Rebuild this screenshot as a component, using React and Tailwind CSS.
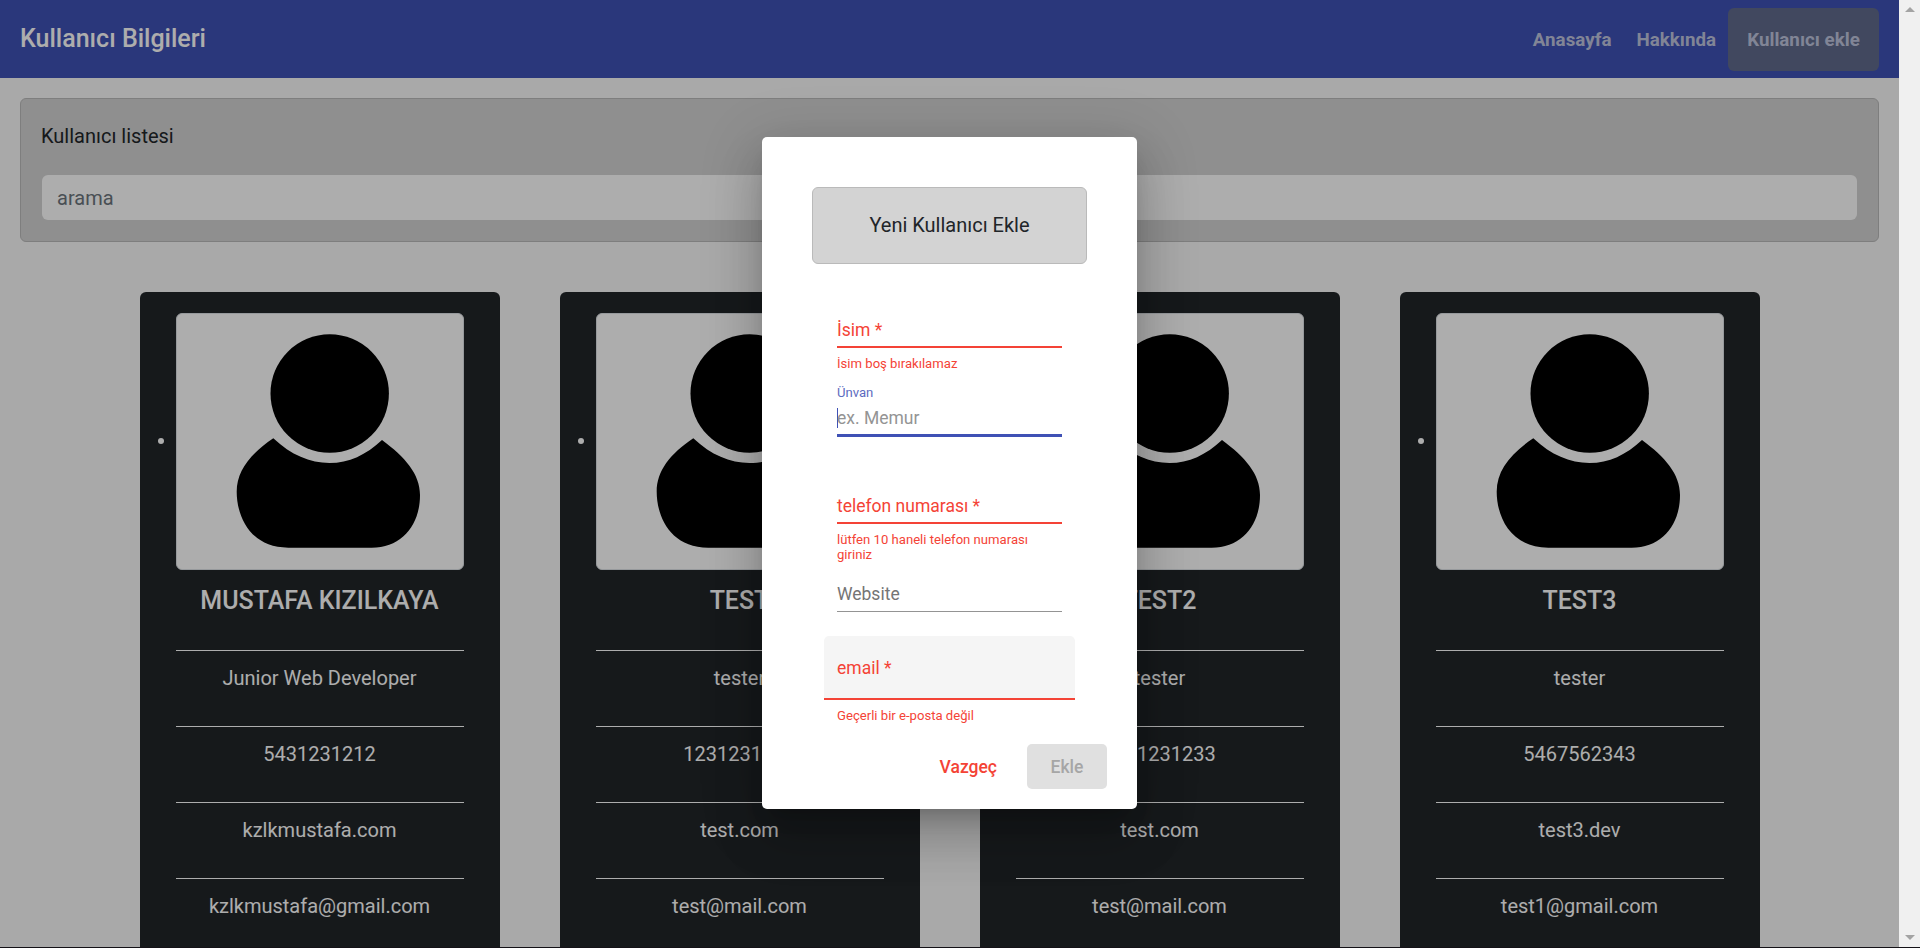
import React from "react";

const users = [
  { name: "MUSTAFA KIZILKAYA", rows: ["Junior Web Developer", "5431231212", "kzlkmustafa.com", "kzlkmustafa@gmail.com"] },
  { name: "TEST", rows: ["tester", "1231231231", "test.com", "test@mail.com"] },
  { name: "TEST2", rows: ["tester", "1231231233", "test.com", "test@mail.com"] },
  { name: "TEST3", rows: ["tester", "5467562343", "test3.dev", "test1@gmail.com"] },
];

function Avatar() {
  return (
    <div className="h-[257px] w-[288px] rounded-md border border-[#dee2e6] bg-white">
      <svg viewBox="1 1 286 255" className="block h-full w-full">
        <circle cx="153.7" cy="80.5" r="59.2" />
        <path d="M97.3 125.3 C115 142 134 150 153.5 150 C173 150 190 142 206 127 C229 144 244 161 244 182 C244 212 226 234.7 195.7 234.7 L112.3 234.7 C74 234.7 60.7 203 60.7 178.7 C60.7 158 74 141 97.3 125.3 Z" />
      </svg>
    </div>
  );
}

function UserCard({ user }) {
  return (
    <div className="flex h-[690px] w-[360px] shrink-0 flex-col items-center rounded-md bg-[#212529] pt-[21px] text-white">
      <div className="flex w-full items-center">
        <span className="ml-[18px] mr-[12px] mt-[-1px] size-[6px] rounded-full bg-white" />
        <Avatar />
      </div>
      <h5 className="mt-[16px] h-[64px] pr-px text-[25px] font-medium leading-[30px]">{user.name}</h5>
      {user.rows.map((row, i) => (
        <div key={i} className="h-[76px] w-[288px] shrink-0 border-t border-white pr-px pt-[12px] text-center text-[20px] leading-[30px]">
          {row}
        </div>
      ))}
    </div>
  );
}

function Field({ label, hint, error }) {
  return (
    <div className="flex h-[88px] flex-col px-[25px]">
      <div className={error ? "h-[32px] border-b-2 border-[#f44336] pt-[2px] text-[17.5px] leading-[24px] text-[#f44336]" : "h-[32px] border-b border-[#949494] pt-[2px] text-[17.5px] leading-[24px] text-[#757575]"}>{label}</div>
      {hint && <div className="mt-[8px] text-[13.125px] leading-[15px] text-[#f44336]">{hint}</div>}
    </div>
  );
}

function Dialog() {
  return (
    <div className="absolute left-[762px] top-[137px] flex h-[672px] w-[375px] flex-col rounded-[5px] bg-white px-[50px] pt-[50px] shadow-[0_14px_19px_-9px_rgba(0,0,0,0.2),0_30px_48px_4px_rgba(0,0,0,0.14),0_11px_58px_10px_rgba(0,0,0,0.12)]">
      <div className="flex h-[77px] shrink-0 items-center justify-center rounded-md border border-[#bababa] bg-[#d3d3d3] pb-[2px] text-[20px] text-[#212529]">
        Yeni Kullanıcı Ekle
      </div>
      <div className="mt-[52px]">
        <Field label="İsim *" hint="İsim boş bırakılamaz" error />
        <div className="flex h-[88px] flex-col px-[25px]">
          <div className="-mt-[21px] h-[22px] text-[13.125px] leading-[20px] text-[#5c6bc0]">Ünvan</div>
          <div className="flex h-[32px] items-start border-b-[3px] border-[#3f51b5] pt-[3px]">
            <span className="-mr-px h-[20px] w-px bg-[#3f51b5]" />
            <span className="-mt-px text-[17.5px] leading-[22px] text-[#949494]">ex. Memur</span>
          </div>
        </div>
        <Field label="telefon numarası *" hint="lütfen 10 haneli telefon numarası giriniz" error />
        <Field label="Website" />
      </div>
      <div className="mx-[12px] -mt-[32px] h-[64px] shrink-0 rounded-t-[5px] border-b-2 border-[#f44336] bg-[#f5f5f5] px-[13px] pt-[20px] text-[17.5px] leading-[24px] text-[#f44336]">
        email *
      </div>
      <div className="ml-[25px] mt-[8px] text-[13.125px] leading-[15px] text-[#f44336]">Geçerli bir e-posta değil</div>
      <div className="-mx-[20px] mt-[21px] flex justify-end gap-[5px]">
        <span className="flex h-[45px] items-center px-[25px] pt-px text-[17.5px] font-medium text-[#f44336]">Vazgeç</span>
        <span className="flex h-[45px] w-[80px] items-center justify-center rounded-[5px] bg-[#e0e0e0] pt-px text-[17.5px] font-medium text-[#a6a6a6]">Ekle</span>
      </div>
    </div>
  );
}

export default function App() {
  return (
    <div className="relative flex h-[948px] w-[1920px] overflow-hidden bg-[#fafafa] font-['Roboto',sans-serif]">
      <div className="flex h-[948px] w-[1899px] shrink-0 flex-col overflow-hidden">
        <nav className="flex h-[78px] shrink-0 items-center justify-between bg-[#3f51b5] px-[20px] text-white">
          <span className="text-[25px] font-medium leading-[40px]">Kullanıcı Bilgileri</span>
          <div className="flex items-center text-[18.75px] font-bold text-[#bfc4de]">
            <span className="pt-[2px]">Anasayfa</span>
            <span className="ml-[25px] pt-[2px]">Hakkında</span>
            <span className="ml-[12px] mt-px flex h-[63px] w-[151px] items-center justify-center rounded-md bg-[#606b8c] pt-px">
              Kullanıcı ekle
            </span>
          </div>
        </nav>
        <section className="mx-[20px] mt-[20px] flex h-[144px] shrink-0 flex-col rounded-md border border-[#bababa] bg-[#d3d3d3] px-[21px] pt-[22px]">
          <div className="-ml-px text-[20px] leading-[30px] text-[#212529]">Kullanıcı listesi</div>
          <div className="mt-[24px] flex h-[45px] items-center rounded-md bg-white px-[15px] text-[20px] text-[#6c757d]">arama</div>
        </section>
        <main className="mt-[50px] flex gap-[60px] px-[140px]">
          {users.map((u) => (
            <UserCard key={u.rows[1]} user={u} />
          ))}
        </main>
      </div>
      <div className="absolute left-0 top-0 h-[948px] w-[1899px] overflow-hidden bg-black/32">
        <Dialog />
      </div>
      <div className="flex w-[21px] flex-col items-center justify-between bg-[#f0f0f0] pb-[8px] pt-[7px]">
        <svg width="10" height="5" viewBox="0 0 10 5"><path d="M0 5 L5 0 L10 5Z" fill="#a3a3a3" /></svg>
        <svg width="10" height="5" viewBox="0 0 10 5"><path d="M0 0 L5 5 L10 0Z" fill="#a3a3a3" /></svg>
      </div>
      <div className="absolute bottom-0 left-0 h-px w-full bg-[#141217]" />
    </div>
  );
}
